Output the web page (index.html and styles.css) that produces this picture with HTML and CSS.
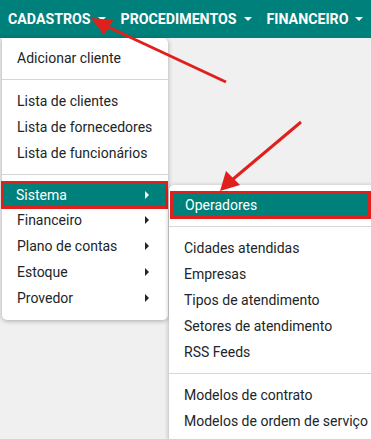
FILE: index.html
```html
<!DOCTYPE html>
<html lang="pt">
<head>
<meta charset="utf-8">
<link rel="stylesheet" href="styles.css">
</head>
<body>
<nav class="navbar">
  <span class="nav-item">CADASTROS <span class="caret"></span></span>
  <span class="nav-item">PROCEDIMENTOS <span class="caret"></span></span>
  <span class="nav-item">FINANCEIRO <span class="caret"></span></span>
</nav>
<div class="stage">
  <div class="menu">
    <div class="item">Adicionar cliente</div>
    <div class="divider"></div>
    <div class="item">Lista de clientes</div>
    <div class="item">Lista de fornecedores</div>
    <div class="item">Lista de funcionários</div>
    <div class="divider"></div>
    <div class="item sub active">Sistema<span class="rcaret"></span></div>
    <div class="item sub">Financeiro<span class="rcaret"></span></div>
    <div class="item sub">Plano de contas<span class="rcaret"></span></div>
    <div class="item sub">Estoque<span class="rcaret"></span></div>
    <div class="item sub">Provedor<span class="rcaret"></span></div>
  </div>
  <div class="submenu">
    <div class="item active">Operadores</div>
    <div class="divider"></div>
    <div class="item">Cidades atendidas</div>
    <div class="item">Empresas</div>
    <div class="item">Tipos de atendimento</div>
    <div class="item">Setores de atendimento</div>
    <div class="item">RSS Feeds</div>
    <div class="divider"></div>
    <div class="item">Modelos de contrato</div>
    <div class="item">Modelos de ordem de serviço</div>
  </div>
</div>
<svg class="arrows" width="371" height="439" viewBox="0 0 371 439">
  <line x1="226" y1="82" x2="106" y2="26" stroke="#e0201c" stroke-width="3"/>
  <polygon points="91,18 113,20 104,35" fill="#e0201c"/>
  <line x1="301" y1="122" x2="232" y2="180" stroke="#e0201c" stroke-width="3"/>
  <polygon points="220,191 226,171 240,185" fill="#e0201c"/>
</svg>
</body>
</html>
```

FILE: styles.css
```css
* { box-sizing: border-box; }
html, body { margin: 0; padding: 0; }
body {
  width: 371px;
  height: 439px;
  overflow: hidden;
  background: #f0f0f0;
  font-family: Roboto, "Liberation Sans", sans-serif;
  position: relative;
}
.navbar {
  height: 38px;
  background: #00807a;
  display: flex;
  align-items: center;
  padding: 0 0 0 8px;
  gap: 15px;
  white-space: nowrap;
}
.nav-item {
  color: #fff;
  font-weight: 700;
  font-size: 14.2px;
  display: flex;
  align-items: center;
}
.caret {
  display: inline-block;
  width: 0; height: 0;
  margin-left: 7px;
  border-left: 4px solid transparent;
  border-right: 4px solid transparent;
  border-top: 4px solid #fff;
}
.stage {
  position: relative;
  height: 401px;
}
.menu {
  position: absolute;
  left: 2px;
  top: 0;
  width: 166px;
  background: #fff;
  border-radius: 0 5px 5px 5px;
  box-shadow: 0 1px 5px rgba(0,0,0,0.3);
  padding: 7px 0 9px;
}
.item {
  height: 26px;
  line-height: 26px;
  font-size: 14px;
  color: #212529;
  padding-left: 15px;
  white-space: nowrap;
  position: relative;
  display: flex;
  align-items: center;
}
.divider {
  height: 1px;
  background: #d6d6d6;
  margin: 8px 0;
}
.sub { justify-content: space-between; padding-right: 19px; }
.rcaret {
  width: 0; height: 0;
  border-top: 4px solid transparent;
  border-bottom: 4px solid transparent;
  border-left: 4px solid #212529;
}
.item.active {
  background: #00807a;
  color: #fff;
  border: 3px solid #e0201c;
  height: 28px;
  padding-left: 12px;
}
.menu .item.active { margin: -2px 0 -2px -1px; width: 167px; padding-right: 16px; }
.item.active .rcaret { border-left-color: #fff; }
.submenu {
  position: absolute;
  left: 169px;
  top: 147px;
  width: 215px;
  background: #fff;
  border-radius: 5px;
  box-shadow: 0 1px 5px rgba(0,0,0,0.3);
  padding: 6px 0 8px;
}
.submenu .item { padding-left: 15px; }
.submenu .item.active { padding-left: 12px; width: 201px; margin: 0 0 -1px 1px; }
.arrows {
  position: absolute;
  left: 0;
  top: 0;
  pointer-events: none;
}
```
